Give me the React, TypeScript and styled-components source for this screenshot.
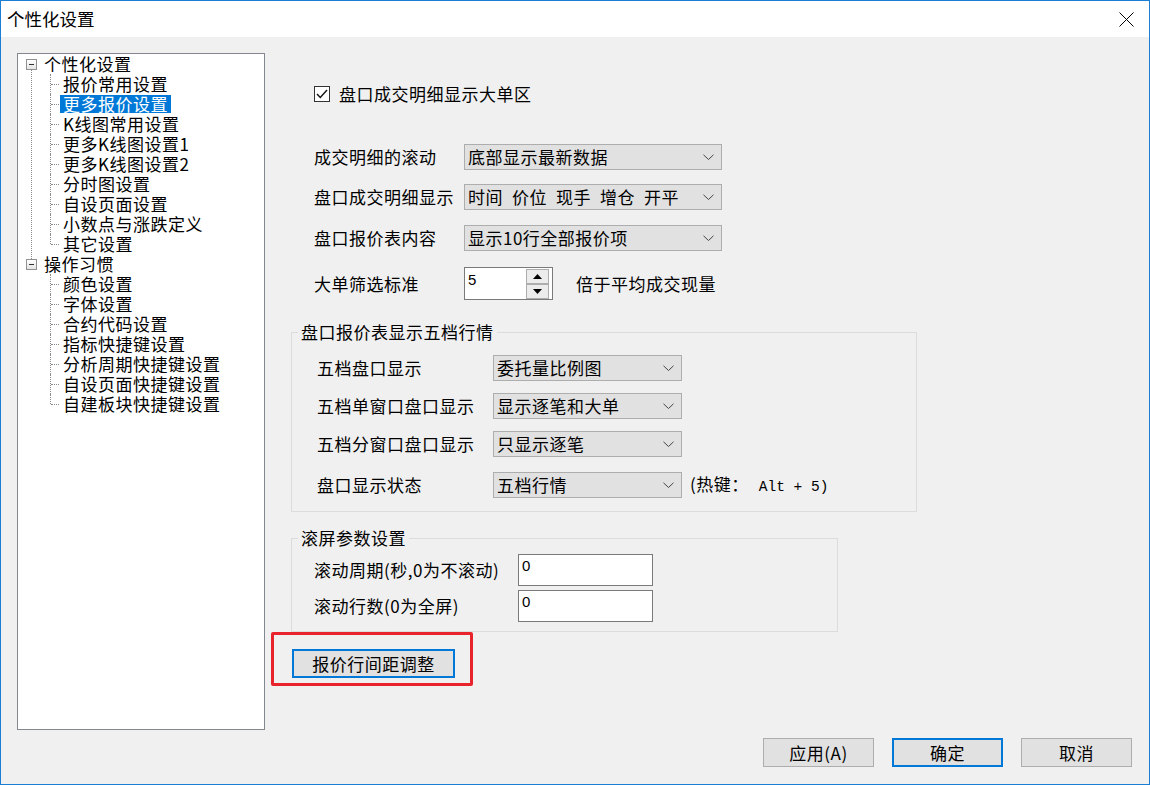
import React from "react";
import styled, { createGlobalStyle } from "styled-components";

const CJK = `"Noto Sans CJK SC", "Liberation Sans", sans-serif`;

const Global = createGlobalStyle`
  html, body { margin: 0; padding: 0; background: #ffffff; }
  body { font-family: ${CJK}; }
  * { box-sizing: border-box; }
`;

const Window = styled.div`
  width: 1150px;
  height: 785px;
  border: 1px solid #1a7fd4;
  background: #f0f0f0;
  display: flex;
  flex-direction: column;
  overflow: hidden;
  font-family: ${CJK};
  color: #000;
  line-height: 20px;
`;

const TitleBar = styled.div`
  height: 36px;
  flex-shrink: 0;
  background: #ffffff;
  display: flex;
  align-items: center;
  justify-content: space-between;
  padding-left: 6px;
`;

const TitleText = styled.div`
  font-size: 17.5px;
  line-height: 36px;
  color: #000;
`;

const CloseBtn = styled.div`
  width: 46px;
  height: 36px;
  display: flex;
  align-items: center;
  justify-content: center;
`;

const Body = styled.div`
  flex: 1;
  display: flex;
  flex-direction: column;
  padding: 16px 17px 0 16px;
`;

const MainRow = styled.div`
  display: flex;
  height: 677px;
`;

const TreePanel = styled.div`
  width: 248px;
  height: 677px;
  flex-shrink: 0;
  background: #ffffff;
  border: 1px solid #828790;
  font-size: 17px;
  letter-spacing: 0.5px;
  line-height: 20px;
`;

const TreeList = styled.ul`
  list-style: none;
  margin: 0;
  padding: 0;
`;

const RootNode = styled.li<{ $last?: boolean }>`
  position: relative;
  &::before {
    content: "";
    display: ${(p) => (p.$last ? "none" : "block")};
    position: absolute;
    left: 13px;
    top: 15px;
    bottom: -5px;
    border-left: 1px dotted #8a8a8a;
  }
`;

const NodeRow = styled.div`
  height: 20px;
  display: flex;
  align-items: center;
  padding-left: 8px;
  gap: 7px;
`;

const Expander = styled.span`
  width: 11px;
  height: 11px;
  border: 1px solid #919191;
  background: linear-gradient(#ffffff, #e4e4e4);
  display: flex;
  align-items: center;
  justify-content: center;
  flex-shrink: 0;
  &::after {
    content: "";
    width: 5px;
    height: 1px;
    background: #333;
  }
`;

const Children = styled.ul`
  list-style: none;
  margin: 0 0 0 32px;
  padding: 0;
`;

const ChildNode = styled.li<{ $last?: boolean }>`
  position: relative;
  height: 20px;
  padding-left: 10px;
  display: flex;
  align-items: center;
  &::before {
    content: "";
    position: absolute;
    left: 0;
    top: 0;
    height: ${(p) => (p.$last ? "10px" : "20px")};
    border-left: 1px dotted #8a8a8a;
  }
  &::after {
    content: "";
    position: absolute;
    left: 1px;
    top: 10px;
    width: 8px;
    border-top: 1px dotted #8a8a8a;
  }
`;

const NodeLabel = styled.span<{ $selected?: boolean }>`
  display: block;
  height: 18px;
  line-height: 18px;
  padding: 0 3px;
  white-space: nowrap;
  background: ${(p) => (p.$selected ? "#0078d7" : "transparent")};
  color: ${(p) => (p.$selected ? "#ffffff" : "#000000")};
`;

const RootLabel = styled.span`
  line-height: 20px;
  white-space: nowrap;
`;

const Content = styled.div`
  flex: 1;
  display: flex;
  flex-direction: column;
  align-items: flex-start;
  font-size: 17px;
  letter-spacing: 0.5px;
`;

const CheckRow = styled.label`
  display: flex;
  align-items: center;
  gap: 9px;
  height: 20px;
  margin: 31px 0 0 49px;
  line-height: 20px;
`;

const CheckBox = styled.span`
  width: 16px;
  height: 16px;
  border: 1px solid #333333;
  background: #ffffff;
  display: flex;
  align-items: center;
  justify-content: center;
`;

const FieldRow = styled.div<{ $mt: number; $indent: number }>`
  display: flex;
  align-items: center;
  margin-top: ${(p) => p.$mt}px;
  margin-left: ${(p) => p.$indent}px;
`;

const FieldLabel = styled.div<{ $w: number }>`
  width: ${(p) => p.$w}px;
  flex-shrink: 0;
  line-height: 20px;
  white-space: nowrap;
`;

const Select = styled.div<{ $w: number }>`
  width: ${(p) => p.$w}px;
  height: 26px;
  background: #e1e1e1;
  border: 1px solid #adadad;
  display: flex;
  align-items: center;
  justify-content: space-between;
  padding: 0 7px 0 3px;
  line-height: 20px;
  white-space: pre;
`;

const TextBox = styled.div<{ $w: number; $h: number }>`
  width: ${(p) => p.$w}px;
  height: ${(p) => p.$h}px;
  background: #ffffff;
  border: 1px solid #7a7a7a;
  padding: 1px 3px;
  font-family: "Liberation Sans", sans-serif;
  font-size: 15px;
  line-height: 20px;
  letter-spacing: 0;
  display: flex;
  justify-content: space-between;
  align-items: flex-start;
`;

const BoxValue = styled.span`
  padding-top: 1px;
`;

const SpinCol = styled.div`
  width: 23px;
  height: 30px;
  display: flex;
  flex-direction: column;
`;

const SpinBtn = styled.div`
  flex: 1;
  border: 1px solid #adadad;
  background: #ececec;
  display: flex;
  align-items: center;
  justify-content: center;
`;

const Suffix = styled.div<{ $ml: number }>`
  margin-left: ${(p) => p.$ml}px;
  line-height: 20px;
  white-space: nowrap;
`;

const Mono = styled.span`
  font-family: "Liberation Mono", monospace;
  font-size: 14.5px;
  letter-spacing: 0;
  margin-left: 10px;
`;

const Group = styled.fieldset<{ $w: number; $mt: number }>`
  width: ${(p) => p.$w}px;
  margin: ${(p) => p.$mt}px 0 0 26px;
  border: 1px solid #dcdcdc;
  padding: 0;
  min-width: 0;
`;

const GroupBody = styled.div<{ $pb: number }>`
  display: flex;
  flex-direction: column;
  padding-bottom: ${(p) => p.$pb}px;
`;

const Legend = styled.legend`
  margin-left: 6px;
  padding: 0 3px;
  line-height: 20px;
  height: 20px;
`;

const Highlight = styled.div`
  width: 202px;
  height: 54px;
  margin: 0 0 0 6px;
  border: 3px solid #e8232b;
  border-radius: 2px;
  padding: 14px 0 0 18px;
`;

const Button = styled.button<{ $w: number; $focused?: boolean }>`
  width: ${(p) => p.$w}px;
  height: 29px;
  background: #e1e1e1;
  border: ${(p) => (p.$focused ? "2px solid #0078d7" : "1px solid #adadad")};
  font-family: ${CJK};
  font-size: 17px;
  letter-spacing: 0.5px;
  color: #000;
  padding: 0;
  line-height: 20px;
  display: flex;
  align-items: center;
  justify-content: center;
`;

const Footer = styled.div`
  display: flex;
  justify-content: flex-end;
  gap: 18px;
  margin-top: 8px;
`;

const Chevron = () => (
  <svg width="11" height="7" viewBox="0 0 11 7">
    <polyline points="0.5,0.8 5.5,5.5 10.5,0.8" fill="none" stroke="#444" strokeWidth="1" />
  </svg>
);

const Triangle = ({ up }: { up?: boolean }) => (
  <svg width="9" height="5" viewBox="0 0 9 5">
    <polygon points={up ? "0,5 9,5 4.5,0" : "0,0 9,0 4.5,5"} fill="#000" />
  </svg>
);

const group1 = ["报价常用设置", "更多报价设置", "K线图常用设置", "更多K线图设置1", "更多K线图设置2", "分时图设置", "自设页面设置", "小数点与涨跌定义", "其它设置"];
const group2 = ["颜色设置", "字体设置", "合约代码设置", "指标快捷键设置", "分析周期快捷键设置", "自设页面快捷键设置", "自建板块快捷键设置"];

export default function App() {
  return (
    <>
      <Global />
      <Window>
        <TitleBar>
          <TitleText>个性化设置</TitleText>
          <CloseBtn>
            <svg width="15" height="15" viewBox="0 0 15 15">
              <line x1="0.5" y1="0.5" x2="14.5" y2="14.5" stroke="#000" strokeWidth="1" />
              <line x1="14.5" y1="0.5" x2="0.5" y2="14.5" stroke="#000" strokeWidth="1" />
            </svg>
          </CloseBtn>
        </TitleBar>
        <Body>
          <MainRow>
            <TreePanel>
              <TreeList>
                <RootNode>
                  <NodeRow>
                    <Expander />
                    <RootLabel>个性化设置</RootLabel>
                  </NodeRow>
                  <Children>
                    {group1.map((t, i) => (
                      <ChildNode key={t} $last={i === group1.length - 1}>
                        <NodeLabel $selected={t === "更多报价设置"}>{t}</NodeLabel>
                      </ChildNode>
                    ))}
                  </Children>
                </RootNode>
                <RootNode $last>
                  <NodeRow>
                    <Expander />
                    <RootLabel>操作习惯</RootLabel>
                  </NodeRow>
                  <Children>
                    {group2.map((t, i) => (
                      <ChildNode key={t} $last={i === group2.length - 1}>
                        <NodeLabel>{t}</NodeLabel>
                      </ChildNode>
                    ))}
                  </Children>
                </RootNode>
              </TreeList>
            </TreePanel>
            <Content>
              <CheckRow>
                <CheckBox>
                  <svg width="12" height="10" viewBox="0 0 12 10">
                    <polyline points="1,5 4.3,8.5 11,1" fill="none" stroke="#111" strokeWidth="1.4" />
                  </svg>
                </CheckBox>
                盘口成交明细显示大单区
              </CheckRow>

              <FieldRow $mt={40} $indent={49}>
                <FieldLabel $w={150}>成交明细的滚动</FieldLabel>
                <Select $w={258}>底部显示最新数据<Chevron /></Select>
              </FieldRow>
              <FieldRow $mt={14} $indent={49}>
                <FieldLabel $w={150}>盘口成交明细显示</FieldLabel>
                <Select $w={258}>{"时间\u2002价位\u2002现手\u2002增仓\u2002开平"}<Chevron /></Select>
              </FieldRow>
              <FieldRow $mt={15} $indent={49}>
                <FieldLabel $w={150}>盘口报价表内容</FieldLabel>
                <Select $w={258}>显示10行全部报价项<Chevron /></Select>
              </FieldRow>
              <FieldRow $mt={16} $indent={49}>
                <FieldLabel $w={150}>大单筛选标准</FieldLabel>
                <TextBox $w={89} $h={33}>
                  <BoxValue>5</BoxValue>
                  <SpinCol>
                    <SpinBtn><Triangle up /></SpinBtn>
                    <SpinBtn><Triangle /></SpinBtn>
                  </SpinCol>
                </TextBox>
                <Suffix $ml={23}>倍于平均成交现量</Suffix>
              </FieldRow>

              <Group $w={626} $mt={22}>
                <Legend>盘口报价表显示五档行情</Legend>
                <GroupBody $pb={13}>
                  <FieldRow $mt={13} $indent={25}>
                    <FieldLabel $w={176}>五档盘口显示</FieldLabel>
                    <Select $w={189}>委托量比例图<Chevron /></Select>
                  </FieldRow>
                  <FieldRow $mt={12} $indent={25}>
                    <FieldLabel $w={176}>五档单窗口盘口显示</FieldLabel>
                    <Select $w={189}>显示逐笔和大单<Chevron /></Select>
                  </FieldRow>
                  <FieldRow $mt={12} $indent={25}>
                    <FieldLabel $w={176}>五档分窗口盘口显示</FieldLabel>
                    <Select $w={189}>只显示逐笔<Chevron /></Select>
                  </FieldRow>
                  <FieldRow $mt={15} $indent={25}>
                    <FieldLabel $w={176}>盘口显示状态</FieldLabel>
                    <Select $w={189}>五档行情<Chevron /></Select>
                    <Suffix $ml={8}>(热键：<Mono>Alt + 5)</Mono></Suffix>
                  </FieldRow>
                </GroupBody>
              </Group>

              <Group $w={547} $mt={16}>
                <Legend>滚屏参数设置</Legend>
                <GroupBody $pb={9}>
                  <FieldRow $mt={6} $indent={22}>
                    <FieldLabel $w={204}>滚动周期(秒,0为不滚动)</FieldLabel>
                    <TextBox $w={135} $h={32}>0</TextBox>
                  </FieldRow>
                  <FieldRow $mt={4} $indent={22}>
                    <FieldLabel $w={204}>滚动行数(0为全屏)</FieldLabel>
                    <TextBox $w={135} $h={32}>0</TextBox>
                  </FieldRow>
                </GroupBody>
              </Group>

              <Highlight>
                <Button $w={163} $focused>报价行间距调整</Button>
              </Highlight>
            </Content>
          </MainRow>
          <Footer>
            <Button $w={111}>应用(A)</Button>
            <Button $w={111} $focused>确定</Button>
            <Button $w={111}>取消</Button>
          </Footer>
        </Body>
      </Window>
    </>
  );
}
